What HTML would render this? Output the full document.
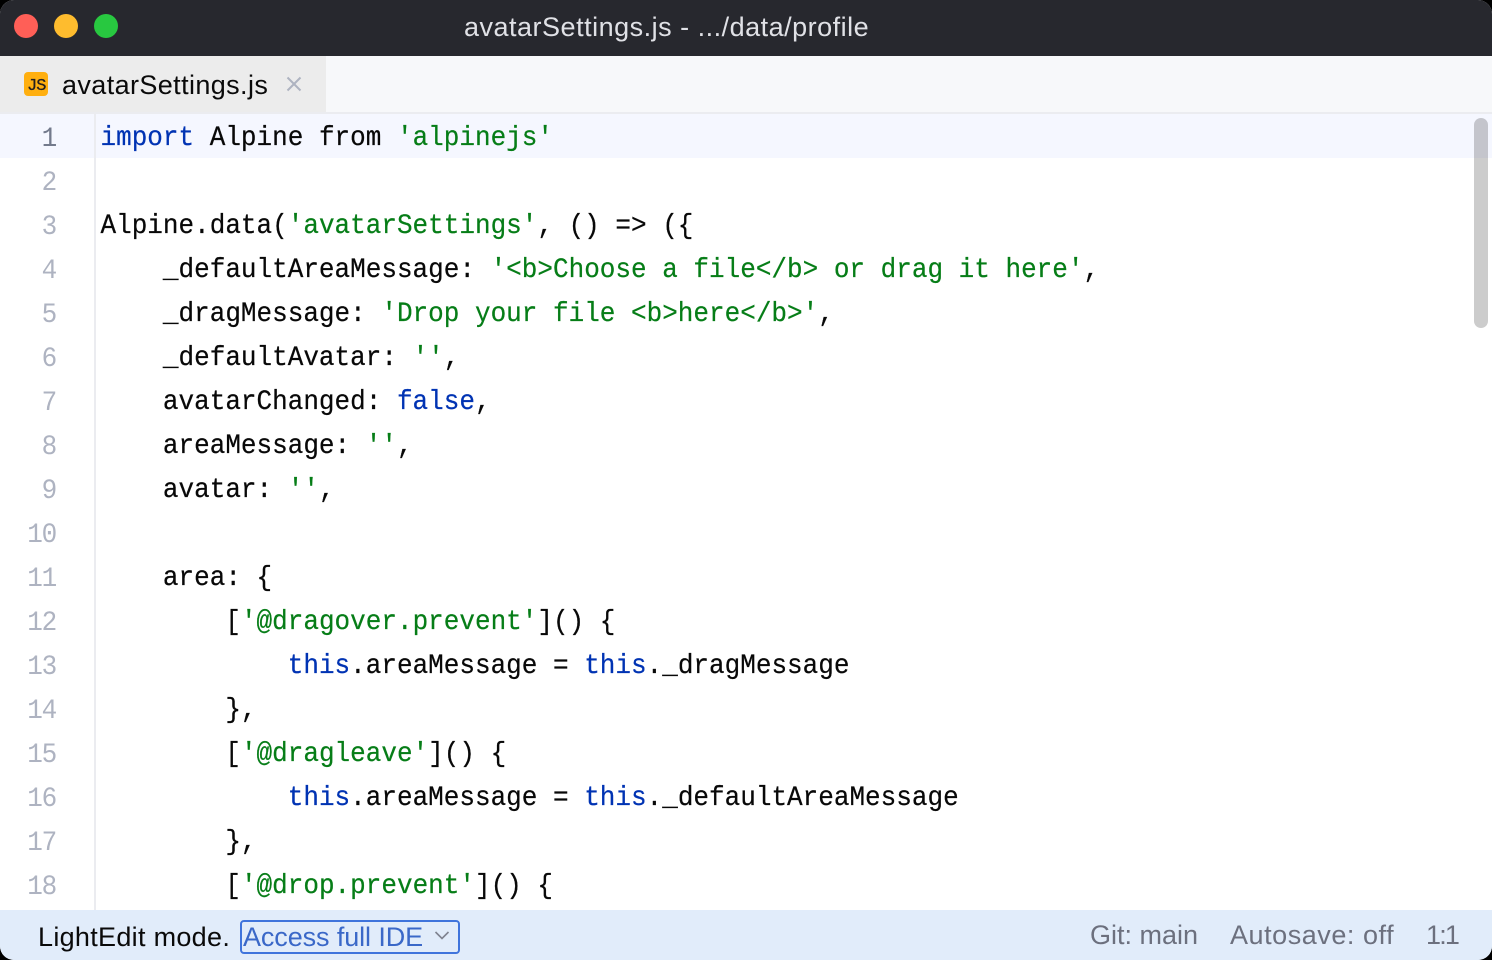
<!DOCTYPE html>
<html><head><meta charset="utf-8"><style>
html,body{margin:0;padding:0;background:#000;width:1492px;height:960px;overflow:hidden}
#w{position:relative;width:1492px;height:960px;background:#fff;border-radius:14px;overflow:hidden;font-family:"Liberation Sans",sans-serif}
#w>*{position:absolute}
.u{white-space:nowrap}
.l{position:absolute;left:100.5px;height:44px;font:26px/44px "Liberation Mono",monospace;color:#080808;white-space:pre;transform:scaleY(1.07);transform-origin:0 30px;-webkit-text-stroke:.2px currentColor}
.n{position:absolute;width:56px;left:0;text-align:right;height:44px;font:26px/44px "Liberation Mono",monospace;color:#aeb3c1;letter-spacing:-1.2px;transform:scaleY(1.07);transform-origin:0 30px}
.s{color:#067d17}.k{color:#0033b3}
</style></head><body><div id="w">
<div style="left:0;top:0;width:1492px;height:56px;background:#27282e"></div>
<div style="left:14px;top:14px;width:24px;height:24px;border-radius:50%;background:#ff5f57"></div>
<div style="left:54px;top:14px;width:24px;height:24px;border-radius:50%;background:#febc2e"></div>
<div style="left:94px;top:14px;width:24px;height:24px;border-radius:50%;background:#28c840"></div>
<div class="u" style="left:464px;top:10px;font-size:27px;line-height:34px;color:#e0e1e6;letter-spacing:.5px">avatarSettings.js - .../data/profile</div>
<div style="left:0;top:56px;width:1492px;height:56px;background:#f7f8fa"></div>
<div style="left:0;top:56px;width:326px;height:56px;background:#ececec"></div>
<div style="left:0;top:112px;width:1492px;height:2px;background:#ebecf0"></div>
<div style="left:24px;top:72px;width:24px;height:24px;border-radius:4px;background:#ffaf0f"></div>
<div class="u" style="left:27px;top:78px;font-size:17px;line-height:17px;color:#231f20;font-family:'Liberation Mono',monospace;letter-spacing:-1px;-webkit-text-stroke:.3px #231f20">JS</div>
<div class="u" style="left:62px;top:68px;font-size:27px;line-height:34px;color:#0a0a0a;letter-spacing:.39px">avatarSettings.js</div>
<svg style="left:285px;top:75px" width="18" height="18" viewBox="0 0 18 18"><path d="M2.5 2.5L15.5 15.5M15.5 2.5L2.5 15.5" stroke="#aeb3c1" stroke-width="2" fill="none"/></svg>
<div style="left:0;top:114px;width:1492px;height:44px;background:#f5f7ff"></div>
<div style="left:94px;top:114px;width:2px;height:796px;background:#ebecf0"></div>
<div id="g" style="left:0;top:0;width:94px;height:910px;overflow:hidden">
<div class="n" style="top:117px;color:#737a8c">1</div>
<div class="n" style="top:161px">2</div>
<div class="n" style="top:205px">3</div>
<div class="n" style="top:249px">4</div>
<div class="n" style="top:293px">5</div>
<div class="n" style="top:337px">6</div>
<div class="n" style="top:381px">7</div>
<div class="n" style="top:425px">8</div>
<div class="n" style="top:469px">9</div>
<div class="n" style="top:513px">10</div>
<div class="n" style="top:557px">11</div>
<div class="n" style="top:601px">12</div>
<div class="n" style="top:645px">13</div>
<div class="n" style="top:689px">14</div>
<div class="n" style="top:733px">15</div>
<div class="n" style="top:777px">16</div>
<div class="n" style="top:821px">17</div>
<div class="n" style="top:865px">18</div>
</div>
<div style="left:0;top:0;width:1492px;height:910px;overflow:hidden">
<div class="l" style="top:116px"><span class="k">import</span> Alpine from <span class="s">'alpinejs'</span></div>
<div class="l" style="top:204px">Alpine.data(<span class="s">'avatarSettings'</span>, () =&gt; ({</div>
<div class="l" style="top:248px">    _defaultAreaMessage: <span class="s">'&lt;b&gt;Choose a file&lt;/b&gt; or drag it here'</span>,</div>
<div class="l" style="top:292px">    _dragMessage: <span class="s">'Drop your file &lt;b&gt;here&lt;/b&gt;'</span>,</div>
<div class="l" style="top:336px">    _defaultAvatar: <span class="s">''</span>,</div>
<div class="l" style="top:380px">    avatarChanged: <span class="k">false</span>,</div>
<div class="l" style="top:424px">    areaMessage: <span class="s">''</span>,</div>
<div class="l" style="top:468px">    avatar: <span class="s">''</span>,</div>
<div class="l" style="top:556px">    area: {</div>
<div class="l" style="top:600px">        [<span class="s">'@dragover.prevent'</span>]() {</div>
<div class="l" style="top:644px">            <span class="k">this</span>.areaMessage = <span class="k">this</span>._dragMessage</div>
<div class="l" style="top:688px">        },</div>
<div class="l" style="top:732px">        [<span class="s">'@dragleave'</span>]() {</div>
<div class="l" style="top:776px">            <span class="k">this</span>.areaMessage = <span class="k">this</span>._defaultAreaMessage</div>
<div class="l" style="top:820px">        },</div>
<div class="l" style="top:864px">        [<span class="s">'@drop.prevent'</span>]() {</div>
</div>
<div style="left:1474px;top:118px;width:14px;height:210px;border-radius:7px;background:rgba(0,0,0,.2)"></div>
<div style="left:0;top:910px;width:1492px;height:50px;background:#e1ecfa"></div>
<div class="u" style="left:38px;top:920px;font-size:27px;line-height:34px;color:#0a0a0a;letter-spacing:.3px">LightEdit mode.</div>
<div style="left:240px;top:920px;width:216px;height:30px;border:2px solid #3f74dc;border-radius:4px"></div>
<div class="u" style="left:243px;top:920px;font-size:27px;line-height:34px;color:#3a68c8;letter-spacing:-.1px">Access full IDE</div>
<svg style="left:433px;top:930px" width="18" height="12" viewBox="0 0 18 12"><path d="M2.5 2L9 8.5L15.5 2" stroke="#7f8390" stroke-width="1.6" fill="none"/></svg>
<div class="u" style="left:1090px;top:918px;font-size:27px;line-height:34px;color:#6c707e">Git: main</div>
<div class="u" style="left:1230px;top:918px;font-size:27px;line-height:34px;color:#6c707e;letter-spacing:.54px">Autosave: off</div>
<div class="u" style="left:1426px;top:918px;font-size:27px;line-height:34px;color:#6c707e;letter-spacing:-1.8px">1:1</div>
</div></body></html>
